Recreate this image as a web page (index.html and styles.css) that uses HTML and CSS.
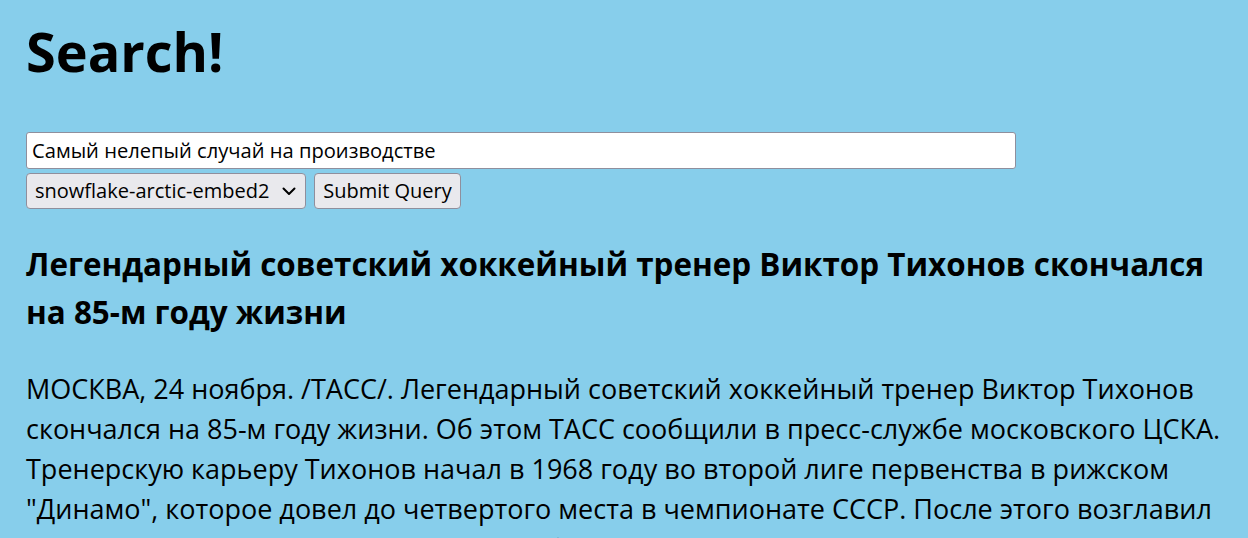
FILE: index.html
```html
<!DOCTYPE html>
<html lang="ru">
<head>
<meta charset="utf-8">
<title>Search!</title>
<link rel="stylesheet" href="styles.css">
</head>
<body>
<main class="page">
  <h1 class="title">Search!</h1>
  <form class="search">
    <input class="query" type="text" value="Самый нелепый случай на производстве">
    <div class="controls">
      <span class="select-wrap">
        <select class="model"><option>snowflake-arctic-embed2</option></select>
        <svg class="chevron" width="14" height="9" viewBox="0 0 14 9" aria-hidden="true"><path d="M1.5 1.5 L7 7 L12.5 1.5" fill="none" stroke="#000" stroke-width="2" stroke-linecap="round" stroke-linejoin="round"/></svg>
      </span>
      <button class="submit" type="button">Submit Query</button>
    </div>
  </form>
  <article class="result">
    <h2 class="result-title">Легендарный советский хоккейный тренер Виктор Тихонов скончался на 85-м году жизни</h2>
    <p class="result-text">МОСКВА, 24 ноября. /ТАСС/. Легендарный советский хоккейный тренер Виктор Тихонов скончался на 85-м году жизни. Об этом ТАСС сообщили в пресс-службе московского ЦСКА. Тренерскую карьеру Тихонов начал в 1968 году во второй лиге первенства в рижском "Динамо", которое довел до четвертого места в чемпионате СССР. После этого возглавил московское "Динамо", а затем ЦСКА и сборную СССР.</p>
  </article>
</main>
</body>
</html>
```

FILE: styles.css
```css
html, body {
  margin: 0;
  padding: 0;
  background: #87ceeb;
}
body {
  font-family: "Open Sans", "Noto Sans", sans-serif;
  font-size: 27px;
  line-height: 40px;
  color: #000;
}
.page {
  padding: 0 16px 0 26px;
}
.title {
  font-size: 54px;
  font-weight: 700;
  line-height: 64.8px;
  margin: 19px 0 48px;
}
.search {
  display: flex;
  flex-direction: column;
  align-items: flex-start;
  gap: 4px;
}
.query {
  width: 990px;
  height: 37px;
  box-sizing: border-box;
  font-family: "Open Sans", "Noto Sans", sans-serif;
  font-size: 20.15px;
  padding: 0 5px;
  border: 1px solid #8f8f9d;
  border-radius: 3px;
  background: #fff;
  color: #000;
}
.controls {
  display: flex;
  gap: 8px;
}
.select-wrap {
  position: relative;
  display: block;
}
.model, .submit {
  height: 36px;
  box-sizing: border-box;
  font-family: "Open Sans", "Noto Sans", sans-serif;
  font-size: 20px;
  color: #000;
  background: #e9e9ed;
  border: 1px solid #8f8f9d;
  border-radius: 4px;
}
.model {
  display: block;
  width: 280px;
  padding: 0 0 0 8px;
  -webkit-appearance: none;
  appearance: none;
}
.chevron {
  position: absolute;
  left: 256px;
  top: 14px;
  pointer-events: none;
}
.submit {
  width: 147px;
  padding: 0;
}
.result-title {
  font-size: 31.4px;
  font-weight: 700;
  line-height: 48px;
  margin: 31.7px 0 32.3px;
}
.result-text {
  margin: 0;
}
```
